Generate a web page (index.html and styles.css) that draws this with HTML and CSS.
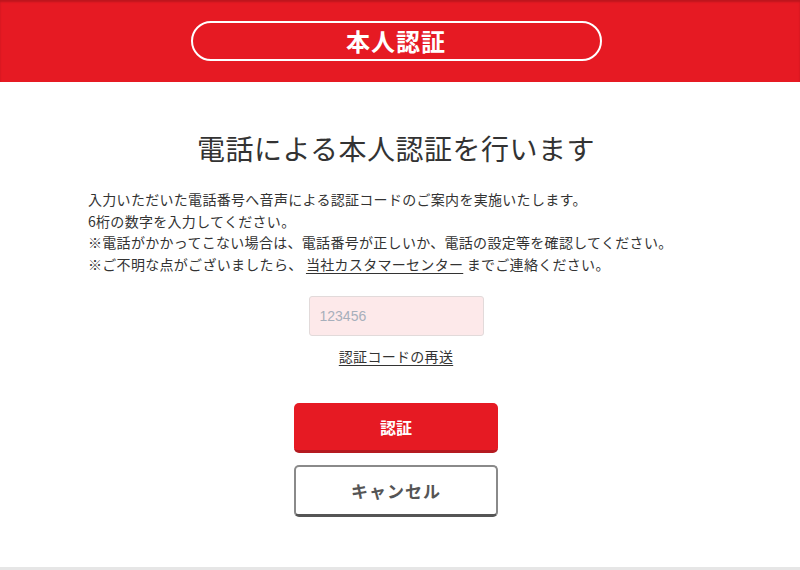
FILE: index.html
```html
<!DOCTYPE html>
<html lang="ja">
<head>
    <meta charset="UTF-8">
    <meta name="viewport" content="width=device-width, initial-scale=1.0">
    <title>本人認証</title>
    <link rel="stylesheet" href="styles.css">
</head>
<body>
    <!-- Header -->
    <header class="header">
        <div class="header-pill">本人認証</div>
    </header>

    <!-- Main -->
    <main class="main">
        <h1 class="title">電話による本人認証を行います</h1>
        <div class="notes">
            <p>入力いただいた電話番号へ音声による認証コードのご案内を実施いたします。</p>
            <p>6桁の数字を入力してください。</p>
            <p>※電話がかかってこない場合は、電話番号が正しいか、電話の設定等を確認してください。</p>
            <p>※ご不明な点がございましたら、 <a href="#" class="link">当社カスタマーセンター</a> までご連絡ください。</p>
        </div>

        <form class="auth-form" onsubmit="return false;">
            <input type="text" class="code-input" placeholder="123456" maxlength="6">
            <a href="#" class="link resend">認証コードの再送</a>
            <button type="submit" class="btn btn-primary">認証</button>
            <button type="button" class="btn btn-cancel">キャンセル</button>
        </form>
    </main>

    <footer class="footer"></footer>
</body>
</html>
```

FILE: styles.css
```css
body {
    margin: 0;
    background: #fff;
    color: #333;
    font-family: "Noto Sans CJK JP", "Noto Sans", sans-serif;
}

.header {
    height: 82px;
    background: #e61a23;
    box-shadow: inset 0 2px 2px rgba(0,0,0,0.18);
    padding: 21px 8px 0 0;
    box-sizing: border-box;
}

.header-pill {
    width: 411px;
    height: 40px;
    margin: 0 auto;
    box-sizing: border-box;
    border: 2px solid #fff;
    border-radius: 20px;
    color: #fff;
    font-size: 24px;
    font-weight: bold;
    line-height: 35px;
    text-align: center;
    letter-spacing: 1px;
}

.main {
    height: 485px;
    box-sizing: border-box;
    padding: 46px 8px 0 0;
}

.title {
    margin: 0;
    font-size: 28px;
    font-weight: normal;
    line-height: 40px;
    text-align: center;
    letter-spacing: 0.5px;
    color: #333;
}

.notes {
    width: 616px;
    margin: 21px auto 0;
    font-size: 14px;
    line-height: 21.5px;
    letter-spacing: 0.3px;
}

.notes p {
    margin: 0;
}

.link {
    color: #333;
    text-decoration: underline;
    text-underline-offset: 3px;
}

.auth-form {
    display: flex;
    flex-direction: column;
    align-items: center;
    margin-top: 21px;
}

.code-input {
    width: 175px;
    height: 40px;
    box-sizing: border-box;
    padding: 0 10px;
    background: #fde9ea;
    border: 1px solid #e2dada;
    border-radius: 3px;
    font-family: "Liberation Sans", Arial, sans-serif;
    font-size: 14px;
    color: #333;
    outline: none;
}

.code-input::placeholder {
    color: #a7afbb;
}

.resend {
    margin-top: 10px;
    font-size: 14px;
    line-height: 21px;
    letter-spacing: 0.3px;
}

.btn {
    width: 204px;
    box-sizing: border-box;
    border-radius: 5px;
    font-family: "Noto Sans CJK JP", "Noto Sans", sans-serif;
    font-weight: bold;
    cursor: pointer;
}

.btn-primary {
    height: 50px;
    margin-top: 36px;
    background: #e61a23;
    border: none;
    border-bottom: 3px solid #b51a20;
    color: #fff;
    font-size: 16px;
}

.btn-cancel {
    height: 52px;
    margin-top: 12px;
    background: #fff;
    border: 2px solid #8a8a8a;
    border-bottom: 3px solid #555;
    color: #555;
    font-size: 17px;
    letter-spacing: 1px;
}

.footer {
    border-top: 3px solid #e6e6e6;
}
```
